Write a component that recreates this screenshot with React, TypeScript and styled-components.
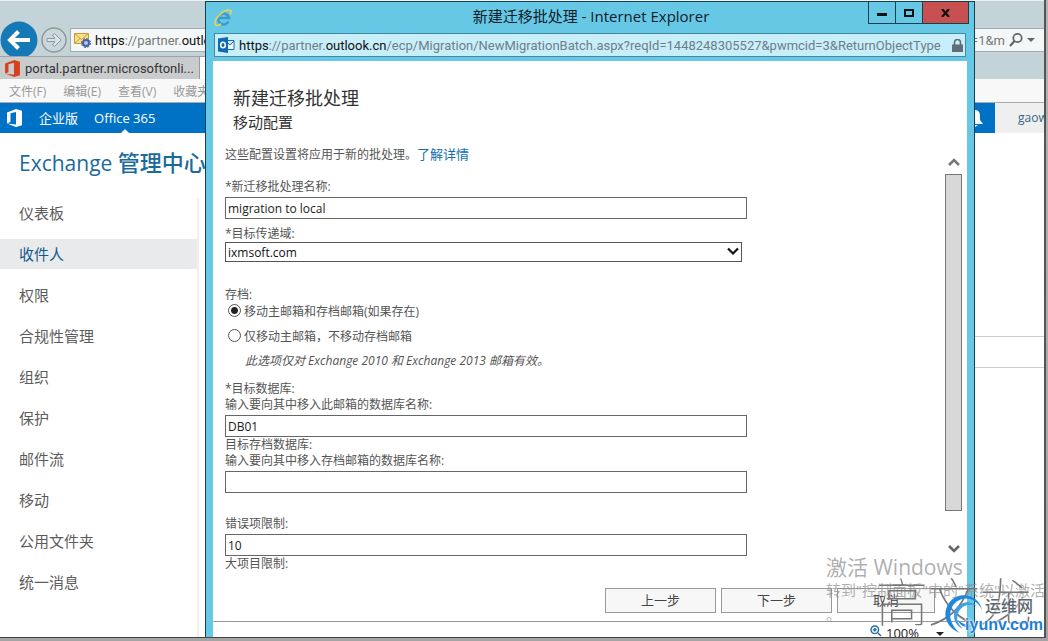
import React from "react";
import styled, { createGlobalStyle, css } from "styled-components";

const Global = createGlobalStyle`
  *, *::before, *::after { box-sizing: border-box; }
  html, body { margin: 0; padding: 0; }
  body, button, input, select {
    font-family: "Open Sans", "Noto Sans CJK SC", sans-serif;
  }
  body { font-size: 12px; color: #555; overflow: hidden; }
  h1, h2, p { margin: 0; font-weight: 400; }
`;

const Screen = styled.div`
  height: 100vh;
  padding: 0 2px 3px 0;
  background: linear-gradient(to bottom, #b4b4b4 0, #a4a4a4 100%);
`;

const Desktop = styled.div`
  position: relative;
  height: 100%;
  overflow: hidden;
  background: #fff;
  border-right: 2px solid #555;
  border-bottom: 1px solid #444;
`;

/* ---------- Browser behind the dialog ---------- */

const Chrome = styled.header`
  background: #c3d3d8;
  border-top: 1px solid #eef2f3;
`;

const AddressRow = styled.div`
  display: flex;
  align-items: center;
  gap: 3px;
  height: 55px;
  padding-top: 23px;
`;

const NavButton = styled.button`
  display: flex;
  padding: 0;
  border: 0;
  background: none;
`;

const AddressField = styled.div`
  flex: 1;
  display: flex;
  align-items: center;
  gap: 4px;
  height: 24px;
  padding: 0 9px 0 3px;
  background: #f4f7f8;
  border: 1px solid #a3aeb2;
  border-right: 0;
  color: #777;
  font-family: Roboto, sans-serif;
  font-size: 13px;
  white-space: nowrap;
`;

const Url = styled.span`
  flex: 1;
  min-width: 0;
  overflow: hidden;
  white-space: nowrap;
  b { font-weight: 400; color: #111; }
`;

const TabRow = styled.div`
  display: flex;
  height: 23px;
`;

const Tab = styled.div<{ $current?: boolean }>`
  display: flex;
  align-items: center;
  gap: 4px;
  width: 200px;
  padding-left: 4px;
  border-top: 1px solid #9aa6aa;
  border-right: 1px solid #9a9a9a;
  background: ${(p) => (p.$current ? "#fff" : "#c9cccd")};
  color: #333;
  font-family: Roboto, sans-serif;
  font-size: 13px;
  white-space: nowrap;
`;

const MenuRow = styled.nav`
  display: flex;
  align-items: center;
  gap: 17px;
  height: 24px;
  padding-left: 9px;
  background: #f8f8f8;
  border-bottom: 1px solid #aaa;
  color: #999;
  font-size: 12px;
  white-space: nowrap;
`;

const SuiteBar = styled.div`
  display: flex;
  align-items: center;
  height: 30px;
  background: #0072c6;
  color: #fff;
  font-size: 13px;
`;

const SuiteLink = styled.a<{ $current?: boolean }>`
  position: relative;
  margin-left: 16px;
  line-height: 30px;
  color: #fff;
  text-decoration: none;
  font-size: 13px;
  ${(p) =>
    p.$current &&
    css`
      &::after {
        content: "";
        position: absolute;
        left: 50%;
        bottom: 0;
        margin-left: -4px;
        border: 4px solid transparent;
        border-top: 0;
        border-bottom-color: #fff;
      }
    `}
`;

const SuiteUser = styled.div`
  height: 30px;
  width: 49px;
  padding-left: 23px;
  overflow: hidden;
  background: #efeff0;
  color: #33677f;
  font-size: 12px;
  line-height: 30px;
`;

const BellSlot = styled.span`
  display: flex;
  margin-left: auto;
  margin-right: 12px;
`;

const Page = styled.main`
  display: flex;
  align-items: flex-start;
`;

const Side = styled.aside`
  flex: none;
  width: 206px;
`;

const SiteTitle = styled.h1`
  height: 65px;
  padding: 14px 0 0 19px;
  color: #1b6a9c;
  font-size: 21px;
  line-height: 30px;
  white-space: nowrap;
  b { font-size: 22px; font-weight: 500; }
`;

const SideNav = styled.nav`
  display: flex;
  flex-direction: column;
  gap: 11px;
  width: 199px;
  height: 460px;
  border-right: 2px solid #f1eeee;
`;

const SideLink = styled.a<{ $current?: boolean }>`
  height: 30px;
  padding-left: 19px;
  line-height: 30px;
  font-size: 15px;
  text-decoration: none;
  color: ${(p) => (p.$current ? "#14598a" : "#5c5c5c")};
  background: ${(p) => (p.$current ? "#e9eaec" : "transparent")};
`;

const ListPane = styled.section`
  flex: 1;
  margin-top: 203px;
  height: 32px;
  border: 1px solid #ccc;
  border-width: 1px 0;
`;

/* ---------- Dialog window ---------- */

const Dialog = styled.section`
  position: absolute;
  top: 1px;
  bottom: 0;
  left: 205px;
  right: 69px;
  display: flex;
  flex-direction: column;
  padding: 0 7px;
  background: #67c8e6;
  border: 1px solid #15404f;
  border-bottom: 0;
`;

const TitleBar = styled.div`
  display: grid;
  grid-template-columns: 96px 1fr 96px;
  height: 31px;
  margin-right: -2px;
  color: #10202a;
  font-size: 15px;
`;

const TitleIcon = styled.span`
  display: flex;
  align-items: center;
  padding-left: 1px;
`;

const TitleText = styled.span`
  line-height: 29px;
  text-align: center;
  white-space: nowrap;
`;

const WindowButtons = styled.div`
  display: flex;
  justify-content: flex-end;
  height: 22px;
`;

const WindowButton = styled.button<{ $close?: boolean }>`
  display: flex;
  align-items: center;
  justify-content: center;
  width: ${(p) => (p.$close ? 47 : 28)}px;
  flex: none;
  padding: 0;
  border: 1px solid #15404f;
  border-top: 0;
  margin-left: -1px;
  background: ${(p) => (p.$close ? "#c75050" : "#67c8e6")};
`;

const DialogAddress = styled.div`
  display: flex;
  align-items: center;
  gap: 4px;
  height: 24px;
  margin: 0 1px;
  padding: 0 2px 0 3px;
  background: #c8eefa;
  border: 1px solid #3f8ba5;
  color: #6c7f87;
  font-family: Roboto, sans-serif;
  font-size: 13px;
`;

const DialogBody = styled.div`
  flex: 1;
  min-height: 0;
  display: flex;
  flex-direction: column;
  margin-top: 4px;
  background: #fff;
`;

const Heading = styled.header`
  padding: 24px 20px 0;
  height: 85px;
  color: #333;
  h1 { font-size: 18px; line-height: 26px; }
  h2 { font-size: 15px; line-height: 22px; }
`;

const Scroller = styled.div`
  flex: 1;
  min-height: 0;
  display: flex;
  justify-content: space-between;
  padding: 0 5px 0 12px;
`;

const Form = styled.form`
  flex: 0 1 522px;
  display: flex;
  flex-direction: column;
  gap: 7px;
  line-height: 16px;
  color: #555;
`;

const Group = styled.div<{ $before?: number }>`
  display: flex;
  flex-direction: column;
  margin-top: ${(p) => p.$before ?? 0}px;
`;

const Intro = styled.p`
  a {
    color: #0f6fb0;
    font-size: 13px;
    text-decoration: none;
  }
`;

const Label = styled.label`
  height: 16px;
  white-space: nowrap;
`;

const TextInput = styled.input`
  width: 100%;
  height: 22px;
  margin-top: 2px;
  padding: 0 2px;
  border: 1px solid #666;
  border-radius: 0;
  background: #fff;
  color: #222;
  font-size: 12px;
`;

const SelectWrap = styled.div`
  position: relative;
  width: 517px;
  height: 20px;
  svg { position: absolute; right: 3px; top: 5px; pointer-events: none; }
`;

const Select = styled.select`
  appearance: none;
  width: 100%;
  height: 20px;
  padding: 0 2px;
  border: 1px solid #555;
  border-radius: 0;
  background: #fff;
  color: #111;
  font-size: 12px;
`;

const Radios = styled.fieldset`
  display: flex;
  flex-direction: column;
  gap: 8px;
  min-width: 0;
  margin: 18px 0 5px;
  padding: 0;
  border: 0;
  legend { padding: 0; height: 16px; }
`;

const RadioLabel = styled.label`
  display: flex;
  align-items: center;
  gap: 3px;
  height: 17px;
  padding-left: 3px;
`;

const Radio = styled.input`
  appearance: none;
  width: 13px;
  height: 13px;
  margin: 0 0 2px;
  border: 1px solid #555;
  border-radius: 50%;
  background: #fff;
  &:checked { background: radial-gradient(circle, #222 0 3px, #fff 4px); }
`;

const Hint = styled.p`
  padding-left: 20px;
  font-style: italic;
`;

const ScrollBar = styled.div`
  display: flex;
  flex-direction: column;
  align-items: center;
  width: 17px;
  padding-top: 11px;
`;

const ScrollThumb = styled.div`
  width: 17px;
  flex: 0 1 337px;
  margin: 7px 0 33px;
  background: #d8d8d8;
  border: 1px solid #777;
`;

const Footer = styled.footer`
  display: flex;
  justify-content: flex-end;
  gap: 5px;
  padding: 8px 32px 8px 0;
  border-bottom: 1px solid #999;
`;

const StepButton = styled.button<{ $narrow?: boolean }>`
  width: ${(p) => (p.$narrow ? 98 : 111)}px;
  height: 25px;
  padding: 0;
  border: 1px solid #999;
  background: #f7f7f7;
  color: #444;
  font-size: 13px;
  line-height: 21px;
`;

const StatusBar = styled.div`
  display: flex;
  justify-content: flex-end;
  align-items: flex-start;
  gap: 4px;
  height: 15px;
  padding: 3px 23px 0 0;
  overflow: hidden;
  color: #222;
  font-size: 13px;
  line-height: 16px;
  svg:last-child { margin: 7px 0 0 13px; }
`;

/* ---------- Overlays ---------- */

const Activation = styled.div`
  position: absolute;
  left: 826px;
  bottom: 11px;
  width: 240px;
  color: rgba(140, 140, 140, 0.7);
  font-size: 15px;
  line-height: 24px;
  pointer-events: none;
  white-space: nowrap;
  strong { display: block; font-size: 21px; font-weight: 400; line-height: 22px; }
`;

const Signature = styled.div`
  position: absolute;
  right: 12px;
  bottom: 9px;
  color: #777;
  font-family: "Noto Sans CJK SC", sans-serif;
  font-weight: 100;
  font-size: 52px;
  line-height: 56px;
  pointer-events: none;
  white-space: nowrap;
`;

const SiteMark = styled.div`
  position: absolute;
  right: 1px;
  bottom: 1px;
  display: flex;
  width: 98px;
  height: 44px;
  pointer-events: none;
  svg { position: absolute; left: 0; top: 0; }
`;

const SiteMarkText = styled.div`
  position: relative;
  display: flex;
  flex-direction: column;
  align-items: flex-end;
  width: 100%;
  padding-top: 6px;
  color: #1e7fd6;
  font-family: "Liberation Sans", "Noto Sans CJK SC", sans-serif;
  font-size: 16px;
  font-weight: 700;
  line-height: 18px;
  text-shadow: 0 0 1px #fff, 0 0 2px #fff, 0 0 3px #fff;
  span { margin-right: 10px; color: #5c6670; font-size: 16px; font-weight: 500; }
`;

const OfficeIcon = ({ color, size }: { color: string; size: number }) => (
  <svg width={size} height={size} viewBox="0 0 16 16">
    <path fill={color} d="M1 3.2 9.6 0 15 1.6v12.8L9.6 16 1 12.8l8.4 1.1V2.7L4.2 4v7.6L1 12.8z" />
  </svg>
);

const sideItems = ["仪表板", "收件人", "权限", "合规性管理", "组织", "保护", "邮件流", "移动", "公用文件夹", "统一消息"];

export default function App() {
  return (
    <Screen>
      <Global />
      <Desktop>
        <Chrome>
          <AddressRow>
            <NavButton aria-label="后退">
              <svg width="38" height="38" viewBox="0 0 38 38">
                <circle cx="19" cy="19" r="18.500" fill="#1479b6" />
                <path d="M30 19H11M18.500 10.500 10 19l8.500 8.500" fill="none" stroke="#fff" strokeWidth="4" />
              </svg>
            </NavButton>
            <NavButton aria-label="前进">
              <svg width="26" height="26" viewBox="0 0 26 26">
                <circle cx="13" cy="13" r="12" fill="#c9d6da" stroke="#8e999d" strokeWidth="1.500" />
                <path d="M6 11.500h8L11.500 8l2-1.500L20 13l-6.500 6.500-2-1.500 2.500-3.500H6z" fill="#dbe4e7" stroke="#8e999d" />
              </svg>
            </NavButton>
            <AddressField>
              <svg width="17" height="16" viewBox="0 0 17 16">
                <path d="M.5 1.500h14v10H.5z" fill="#fbe08a" stroke="#c69a35" />
                <path d="m.5 1.500 7 6 7-6M.5 11.500 6 6.500" fill="none" stroke="#c69a35" />
                <circle cx="12" cy="11" r="3" fill="#b9c8ec" stroke="#4461a8" strokeWidth="2" />
                <circle cx="12" cy="11" r="4.500" fill="none" stroke="#4461a8" strokeDasharray="2 1.500" />
              </svg>
              <Url><b>https</b>://partner.<b>outlook.cn</b>/ecp/</Url>
              <span>=1&amp;m</span>
              <svg width="14" height="16" viewBox="0 0 14 16">
                <circle cx="8.500" cy="6" r="4.200" fill="none" stroke="#666" strokeWidth="1.800" />
                <path d="M5.500 9 1 14" stroke="#666" strokeWidth="2.200" />
              </svg>
              <svg width="8" height="5" viewBox="0 0 8 5"><path d="M0 0h8L4 4z" fill="#666" /></svg>
            </AddressField>
          </AddressRow>
          <TabRow>
            <Tab><OfficeIcon color="#d8401c" size={17} />portal.partner.microsoftonli...</Tab>
            <Tab $current />
          </TabRow>
        </Chrome>
        <MenuRow>
          <span>文件(F)</span><span>编辑(E)</span><span>查看(V)</span><span>收藏夹(A)</span>
        </MenuRow>
        <SuiteBar>
          <svg width="23" height="18" viewBox="-7 0 23 18"><path fill="#fff" d="M0 3.500 9 0l6 1.800v14.400L9 18l-9-3.500 9 1V3L3.500 4.300v8.500L0 14.500z" /></svg>
          <SuiteLink href="#business">企业版</SuiteLink>
          <SuiteLink href="#office" $current>Office 365</SuiteLink>
          <BellSlot>
            <svg width="16" height="17" viewBox="0 0 16 17">
              <path d="M8 0c4 0 5 3 5 6v4l3 4H0l3-4V6c0-3 1-6 5-6zM5 15h6l-3 2z" fill="#fff" />
            </svg>
          </BellSlot>
          <SuiteUser>gaowenlong</SuiteUser>
        </SuiteBar>
        <Page>
          <Side>
            <SiteTitle>Exchange <b>管理中心</b></SiteTitle>
            <SideNav>
              {sideItems.map((t, i) => (
                <SideLink key={t} href={`#${i}`} $current={i === 1}>{t}</SideLink>
              ))}
            </SideNav>
          </Side>
          <ListPane />
        </Page>

        <Dialog role="dialog" aria-label="新建迁移批处理">
          <TitleBar>
            <TitleIcon>
              <svg width="18" height="18" viewBox="0 0 18 18">
                <path d="M14.500 12.500A5.500 5.500 0 1 1 15 9H5" fill="none" stroke="#3b9bd0" strokeWidth="2.600" />
                <path d="M1.500 16C-1 11 10-1 16.500 1.500c1 .8.500 2.500-.5 4M1.500 16c1.500 1 4 0 5.500-1" fill="none" stroke="#ddd65a" strokeWidth="1.700" />
              </svg>
            </TitleIcon>
            <TitleText>新建迁移批处理 - Internet Explorer</TitleText>
            <WindowButtons>
              <WindowButton aria-label="最小化"><svg width="10" height="10"><path d="M0 5h10v3H0z" fill="#111" /></svg></WindowButton>
              <WindowButton aria-label="最大化"><svg width="10" height="8"><path d="M1 1h8v6H1z" fill="none" stroke="#111" strokeWidth="2" /></svg></WindowButton>
              <WindowButton $close aria-label="关闭"><svg width="10" height="8"><path d="m1 0 7 8M8 0 1 8" stroke="#111" strokeWidth="2.200" /></svg></WindowButton>
            </WindowButtons>
          </TitleBar>
          <DialogAddress>
            <svg width="17" height="16" viewBox="0 0 17 16">
              <path d="M8 3.500h8v9H8zM8 4l4 4 4-4" fill="#e9f6fb" stroke="#1c6fae" />
              <path d="M0 1.500 10 0v16L0 14.500z" fill="#0f6ab0" />
              <ellipse cx="5" cy="8" rx="2.300" ry="2.800" fill="none" stroke="#fff" strokeWidth="1.500" />
            </svg>
            <Url><b>https</b>://partner.<b>outlook.cn</b>/ecp/Migration/NewMigrationBatch.aspx?reqId=1448248305527&amp;pwmcid=3&amp;ReturnObjectType</Url>
            <svg width="11" height="13" viewBox="0 0 11 13">
              <path d="M0 5.500h11V13H0z" fill="#5f6d74" />
              <path d="M2.500 6V3.500a3 3 0 0 1 6 0V6" fill="none" stroke="#5f6d74" strokeWidth="1.600" />
            </svg>
          </DialogAddress>
          <DialogBody>
            <Heading>
              <h1>新建迁移批处理</h1>
              <h2>移动配置</h2>
            </Heading>
            <Scroller>
              <Form>
                <Intro>这些配置设置将应用于新的批处理。<a href="#learn">了解详情</a></Intro>
                <Group $before={9}>
                  <Label htmlFor="batch">*新迁移批处理名称:</Label>
                  <TextInput id="batch" defaultValue="migration to local" />
                </Group>
                <Group>
                  <Label htmlFor="domain">*目标传递域:</Label>
                  <SelectWrap>
                    <Select id="domain"><option>ixmsoft.com</option></Select>
                    <svg width="12" height="9" viewBox="0 0 12 9"><path d="m1 1.500 5 5 5-5" fill="none" stroke="#111" strokeWidth="2.200" /></svg>
                  </SelectWrap>
                </Group>
                <Radios>
                  <legend>存档:</legend>
                  <RadioLabel><Radio type="radio" name="archive" defaultChecked />移动主邮箱和存档邮箱(如果存在)</RadioLabel>
                  <RadioLabel><Radio type="radio" name="archive" />仅移动主邮箱，不移动存档邮箱</RadioLabel>
                  <Hint>此选项仅对 Exchange 2010 和 Exchange 2013 邮箱有效。</Hint>
                </Radios>
                <Group>
                  <Label as="span">*目标数据库:</Label>
                  <Label htmlFor="db">输入要向其中移入此邮箱的数据库名称:</Label>
                  <TextInput id="db" defaultValue="DB01" />
                  <Label as="span">目标存档数据库:</Label>
                  <Label htmlFor="adb">输入要向其中移入存档邮箱的数据库名称:</Label>
                  <TextInput id="adb" />
                </Group>
                <Group $before={16}>
                  <Label htmlFor="bad">错误项限制:</Label>
                  <TextInput id="bad" defaultValue="10" />
                  <Label as="span">大项目限制:</Label>
                </Group>
              </Form>
              <ScrollBar>
                <svg width="12" height="10" viewBox="0 0 12 10"><path d="m1 8 5-5 5 5" fill="none" stroke="#777" strokeWidth="2.600" /></svg>
                <ScrollThumb />
                <svg width="12" height="10" viewBox="0 0 12 10"><path d="m1 2 5 5 5-5" fill="none" stroke="#666" strokeWidth="2.600" /></svg>
              </ScrollBar>
            </Scroller>
            <Footer>
              <StepButton>上一步</StepButton>
              <StepButton>下一步</StepButton>
              <StepButton $narrow>取消</StepButton>
            </Footer>
            <StatusBar>
              <svg width="12" height="12" viewBox="0 0 12 12">
                <circle cx="4.800" cy="4.800" r="3.800" fill="#e8f4fb" stroke="#2e7096" strokeWidth="1.400" />
                <path d="M3 4.800h3.600M4.800 3v3.600M8 8l3 3" stroke="#2e7096" strokeWidth="1.500" />
              </svg>
              <span>100%</span>
              <svg width="8" height="4" viewBox="0 0 8 4"><path d="M0 0h8L4 4z" fill="#222" /></svg>
            </StatusBar>
          </DialogBody>
        </Dialog>

        <Activation>
          <strong>激活 Windows</strong>
          转到"控制面板"中的"系统"以激活<br />。
        </Activation>
        <Signature>高文龙</Signature>
        <SiteMark>
          <svg width="40" height="44" viewBox="0 0 40 44">
            <path d="M37 18C34 2 13-2 4 11-4 23 2 36 15 41 5 33 2 21 9 12 17 3 31 5 37 18z" fill="#1e88dd" />
            <path d="M32 14C23 6 9 12 9 24c0 6 4 11 9 13-5-5-7-10-5-15 2-8 11-11 19-8z" fill="#3f9fe6" />
            <path d="M13 28c2 7 10 9 15 5-5 1-11-1-15-5z" fill="#1e88dd" />
          </svg>
          <SiteMarkText><span>运维网</span>iyunv.com</SiteMarkText>
        </SiteMark>
      </Desktop>
    </Screen>
  );
}
